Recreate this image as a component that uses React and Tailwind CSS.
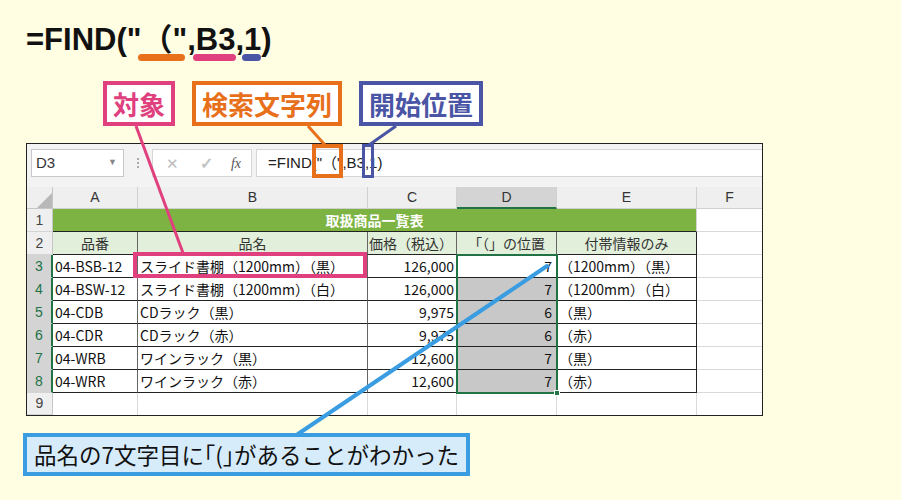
const JP = "font-['Noto_Sans_CJK_JP','Noto_Sans',sans-serif]"
const SANS = "font-['Liberation_Sans','Noto_Sans_CJK_JP',sans-serif]"

const items = [
  { n: 3, code: '04-BSB-12', name: 'スライド書棚（1200mm）（黒）', price: '126,000', pos: '7', extra: '（1200mm）（黒）' },
  { n: 4, code: '04-BSW-12', name: 'スライド書棚（1200mm）（白）', price: '126,000', pos: '7', extra: '（1200mm）（白）' },
  { n: 5, code: '04-CDB', name: 'CDラック（黒）', price: '9,975', pos: '6', extra: '（黒）' },
  { n: 6, code: '04-CDR', name: 'CDラック（赤）', price: '9,975', pos: '6', extra: '（赤）' },
  { n: 7, code: '04-WRB', name: 'ワインラック（黒）', price: '12,600', pos: '7', extra: '（黒）' },
  { n: 8, code: '04-WRR', name: 'ワインラック（赤）', price: '12,600', pos: '7', extra: '（赤）' },
]

function RowHead({ n, sel }) {
  return (
    <div
      className={`w-[26px] shrink-0 flex items-center justify-center border-b border-b-[#d4d4d4] text-[14px] ${SANS} ${
        sel ? 'bg-[#d4d4d4] text-[#217346] border-r-2 border-r-[#217346]' : 'bg-[#efefef] text-[#444] border-r border-r-[#c6c6c6]'
      }`}
    >
      {n}
    </div>
  )
}

function Label({ color, children }) {
  return (
    <div className={`h-[45px] border-4 bg-white px-[6px] flex items-center text-[26px] font-bold leading-none ${JP} ${color}`}>
      {children}
    </div>
  )
}

export default function App() {
  return (
    <div className="relative w-[901px] h-[500px] overflow-hidden bg-[#fffde2] text-[#111]">
      {/* formula title */}
      <div className={`h-[56px] pt-[21px] pl-[26px] text-[31px] leading-[32px] font-bold ${SANS}`}>
        =FIND("<span className={JP}>（</span>",B3,1)
      </div>

      {/* labels */}
      <div className="mt-[25px] ml-[103px] flex gap-[17px]">
        <Label color="border-[#e0407e] text-[#e0407e]">対象</Label>
        <Label color="border-[#e8701b] text-[#e8701b]">検索文字列</Label>
        <Label color="border-[#4a55a5] text-[#4a55a5]">開始位置</Label>
      </div>

      {/* spreadsheet */}
      <div className="mt-[17px] ml-[26px] w-[737px] border border-[#222] bg-white">
        <div className="h-[43px] bg-[#f3f3f3] flex items-start pt-[5px] pl-[4px]">
          <div className={`w-[93px] h-[28px] bg-white border border-[#c8c8c8] flex items-center justify-between pl-[4px] pr-[6px] text-[15px] text-[#333] ${SANS}`}>
            <span>D3</span>
            <span className="text-[9px] text-[#888]">▼</span>
          </div>
          <div className="w-[28px] h-[28px] flex flex-col items-center justify-center gap-[2px]">
            <span className="w-[2px] h-[2px] bg-[#aaa]" />
            <span className="w-[2px] h-[2px] bg-[#aaa]" />
            <span className="w-[2px] h-[2px] bg-[#aaa]" />
          </div>
          <div className="w-[100px] h-[28px] bg-white border border-[#d6d6d6] flex items-center">
            <span className="w-[38px] text-center text-[15px] text-[#bcbcbc]">✕</span>
            <span className="w-[30px] text-center text-[16px] font-bold text-[#c4c4c4]">✓</span>
            <span className="w-[30px] text-center text-[14px] italic text-[#555] font-['Liberation_Serif',serif]">fx</span>
          </div>
          <div className={`ml-[4px] flex-1 h-[28px] bg-white border-y border-l border-[#d6d6d6] flex items-center pl-[11px] text-[15px] text-[#222] ${SANS}`}>
            =FIND("<span className={JP}>（</span>",B3,1)
          </div>
        </div>

        <div className="relative">
          {/* column headers */}
          <div className={`flex h-[22px] bg-[#efefef] text-[14px] text-[#333] ${SANS}`}>
            <div className="w-[26px] shrink-0 border-r border-b border-[#c6c6c6] flex items-end justify-end">
              <svg width="16" height="16" viewBox="0 0 16 16">
                <polygon points="16,1 16,16 1,16" fill="#b8b8b8" />
              </svg>
            </div>
            <div className="w-[85px] flex items-center justify-center border-r border-b border-[#d0d0d0]">A</div>
            <div className="w-[230px] flex items-center justify-center border-r border-b border-[#d0d0d0]">B</div>
            <div className="w-[89px] flex items-center justify-center border-r border-b border-[#d0d0d0]">C</div>
            <div className="w-[100px] flex items-center justify-center border-r border-r-[#d0d0d0] border-b-2 border-b-[#217346] bg-[#d4d4d4]">D</div>
            <div className="w-[140px] flex items-center justify-center border-r border-b border-[#d0d0d0]">E</div>
            <div className="flex-1 flex items-center justify-center border-b border-[#d0d0d0]">F</div>
          </div>

          <div className={`text-[14px] ${JP}`}>
            {/* row 1 */}
            <div className="flex h-[23px]">
              <RowHead n={1} />
              <div className="w-[644px] bg-[#7db343] text-white font-bold flex items-center justify-center border-b border-b-[#222] border-r border-r-[#d4d4d4]">
                取扱商品一覧表
              </div>
              <div className="flex-1 border-b border-[#d9d9d9]" />
            </div>

            {/* row 2 */}
            <div className="flex h-[23px] text-[#333]">
              <RowHead n={2} />
              <div className="w-[85px] bg-[#e2efda] flex items-center justify-center border-r border-r-[#666] border-b border-b-[#222]">品番</div>
              <div className="w-[230px] bg-[#e2efda] flex items-center justify-center border-r border-r-[#666] border-b border-b-[#222]">品名</div>
              <div className="w-[89px] bg-[#e2efda] flex items-center justify-start pl-[1px] whitespace-nowrap overflow-hidden border-r border-r-[#666] border-b border-b-[#222]">価格（税込）</div>
              <div className="w-[100px] bg-[#e2efda] flex items-center justify-center border-r border-r-[#666] border-b border-b-[#222]">「（」の位置</div>
              <div className="w-[140px] bg-[#e2efda] flex items-center justify-center border-r border-r-[#222] border-b border-b-[#222]">付帯情報のみ</div>
              <div className="flex-1 border-b border-[#d9d9d9]" />
            </div>

            {items.map((it) => (
              <div key={it.n} className="flex h-[23px] text-[#111]">
                <RowHead n={it.n} sel />
                <div className="w-[85px] flex items-center pl-[2px] border-r border-r-[#666] border-b border-b-[#222]">{it.code}</div>
                <div className="w-[230px] flex items-center pl-[2px] whitespace-nowrap overflow-hidden border-r border-r-[#666] border-b border-b-[#222]">{it.name}</div>
                <div className="w-[89px] flex items-center justify-end pr-[2px] border-r border-r-[#666] border-b border-b-[#222]">{it.price}</div>
                <div className={`w-[100px] flex items-center justify-end pr-[4px] border-r border-r-[#666] border-b border-b-[#222] ${it.n === 3 ? 'bg-white' : 'bg-[#c8c8c8]'}`}>{it.pos}</div>
                <div className="w-[140px] flex items-center pl-[2px] whitespace-nowrap border-r border-r-[#222] border-b border-b-[#222]">{it.extra}</div>
                <div className="flex-1 border-b border-[#d9d9d9]" />
              </div>
            ))}

            {/* row 9 */}
            <div className="flex h-[22px]">
              <RowHead n={9} />
              <div className="w-[85px] border-r border-[#d9d9d9]" />
              <div className="w-[230px] border-r border-[#d9d9d9]" />
              <div className="w-[89px] border-r border-[#d9d9d9]" />
              <div className="w-[100px] border-r border-[#d9d9d9]" />
              <div className="w-[140px] border-r border-[#d9d9d9]" />
              <div className="flex-1" />
            </div>
          </div>

          {/* selection D3:D8 */}
          <div className="absolute left-[429px] top-[67px] w-[102px] h-[140px] border-2 border-[#217346] pointer-events-none">
            <div className="absolute -right-[4px] -bottom-[4px] w-[6px] h-[6px] bg-[#217346] border border-white" />
          </div>
        </div>
      </div>

      {/* callout */}
      <div className={`mt-[17px] ml-[23px] w-[447px] h-[43px] border-4 border-[#3a9de2] bg-[#d6ecfa] flex items-center pl-[7px] whitespace-nowrap text-[22.5px] font-normal text-[#111] ${JP}`}>
        品名の7文字目に｢(｣があることがわかった
      </div>

      {/* formula underlines */}
      <div className="absolute left-[138px] top-[54px] w-[47px] h-[7px] rounded-full bg-[#e8701b]" />
      <div className="absolute left-[193px] top-[54px] w-[43px] h-[7px] rounded-full bg-[#e0407e]" />
      <div className="absolute left-[242px] top-[54px] w-[19px] h-[7px] rounded-full bg-[#4a55a5]" />

      {/* annotation lines and boxes */}
      <svg className="absolute left-0 top-0 pointer-events-none" width="901" height="500" viewBox="0 0 901 500">
        <line x1="136" y1="126" x2="183" y2="253" stroke="#e0407e" strokeWidth="3" />
        <line x1="308" y1="126" x2="325" y2="145" stroke="#e8701b" strokeWidth="3" />
        <line x1="396" y1="126" x2="369" y2="145" stroke="#4a55a5" strokeWidth="3" />
        <rect x="135" y="254" width="230" height="22" fill="none" stroke="#e0407e" strokeWidth="4" />
        <rect x="314" y="146" width="27" height="30" fill="none" stroke="#e8701b" strokeWidth="4" />
        <rect x="363.5" y="145.5" width="9" height="31" fill="none" stroke="#4a55a5" strokeWidth="3" />
        <line x1="547" y1="266" x2="298" y2="434" stroke="#3a9de2" strokeWidth="4" strokeLinecap="round" />
      </svg>
    </div>
  )
}
